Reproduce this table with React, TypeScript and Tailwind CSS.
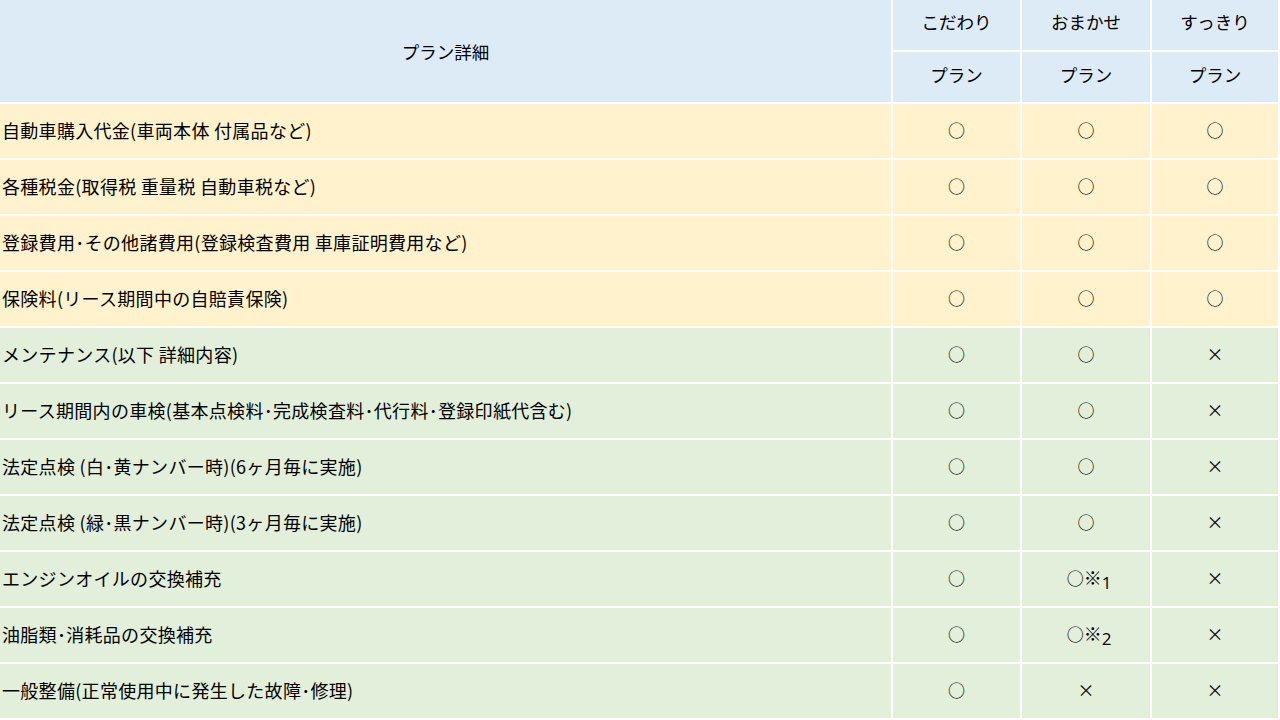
import React from "react";

const O = "○";
const X = "×";

type Row = { label: string; marks: React.ReactNode[]; tone: "y" | "g" };

const Note = ({ n }: { n: string }) => (
  <span className="pl-[6px]">
    {O}
    <span className="text-[18px]">※</span>
    <span className="relative top-[4px] font-['Open_Sans',sans-serif] text-[17px]">{n}</span>
  </span>
);

const rows: Row[] = [
  { label: "自動車購入代金(車両本体 付属品など)", marks: [O, O, O], tone: "y" },
  { label: "各種税金(取得税 重量税 自動車税など)", marks: [O, O, O], tone: "y" },
  { label: "登録費用･その他諸費用(登録検査費用 車庫証明費用など)", marks: [O, O, O], tone: "y" },
  { label: "保険料(リース期間中の自賠責保険)", marks: [O, O, O], tone: "y" },
  { label: "メンテナンス(以下 詳細内容)", marks: [O, O, X], tone: "g" },
  { label: "リース期間内の車検(基本点検料･完成検査料･代行料･登録印紙代含む)", marks: [O, O, X], tone: "g" },
  { label: "法定点検 (白･黄ナンバー時)(6ヶ月毎に実施)", marks: [O, O, X], tone: "g" },
  { label: "法定点検 (緑･黒ナンバー時)(3ヶ月毎に実施)", marks: [O, O, X], tone: "g" },
  { label: "エンジンオイルの交換補充", marks: [O, <Note n="1" />, X], tone: "g" },
  { label: "油脂類･消耗品の交換補充", marks: [O, <Note n="2" />, X], tone: "g" },
  { label: "一般整備(正常使用中に発生した故障･修理)", marks: [O, X, X], tone: "g" },
];

export default function App() {
  return (
    <div className="w-[1280px] h-[720px] overflow-hidden bg-white text-black font-['Noto_Sans_CJK_JP','Noto_Sans',sans-serif] text-[17px]">
      <div className="grid grid-cols-[891px_127px_128px_126px] grid-rows-[50px_50px] gap-[2px] auto-rows-[54px]">
        <div className="row-span-2 bg-[#ddebf7] flex items-center justify-center text-[17.5px] pt-[3px]">プラン詳細</div>
        <div className="bg-[#ddebf7] flex items-center justify-center pb-[5px] text-[17.5px]">こだわり</div>
        <div className="bg-[#ddebf7] flex items-center justify-center pb-[5px] text-[17.5px]">おまかせ</div>
        <div className="bg-[#ddebf7] flex items-center justify-center pb-[5px] text-[17.5px]">すっきり</div>
        <div className="bg-[#ddebf7] flex items-center justify-center pb-[4px] text-[17.5px]">プラン</div>
        <div className="bg-[#ddebf7] flex items-center justify-center pb-[4px] text-[17.5px]">プラン</div>
        <div className="bg-[#ddebf7] flex items-center justify-center pb-[4px] text-[17.5px]">プラン</div>
        {rows.map((r, i) => (
          <React.Fragment key={i}>
            <div
              className={`${r.tone === "y" ? "bg-[#fff2cc]" : "bg-[#e2efda]"} h-[54px] flex items-center pl-[2px] whitespace-nowrap text-[18px] tracking-[0.3px] pb-[2px]`}
            >
              {r.label}
            </div>
            {r.marks.map((m, j) => (
              <div
                key={j}
                className={`${r.tone === "y" ? "bg-[#fff2cc]" : "bg-[#e2efda]"} h-[54px] flex items-center justify-center pb-[2px]`}
              >
                {m}
              </div>
            ))}
          </React.Fragment>
        ))}
      </div>
    </div>
  );
}
